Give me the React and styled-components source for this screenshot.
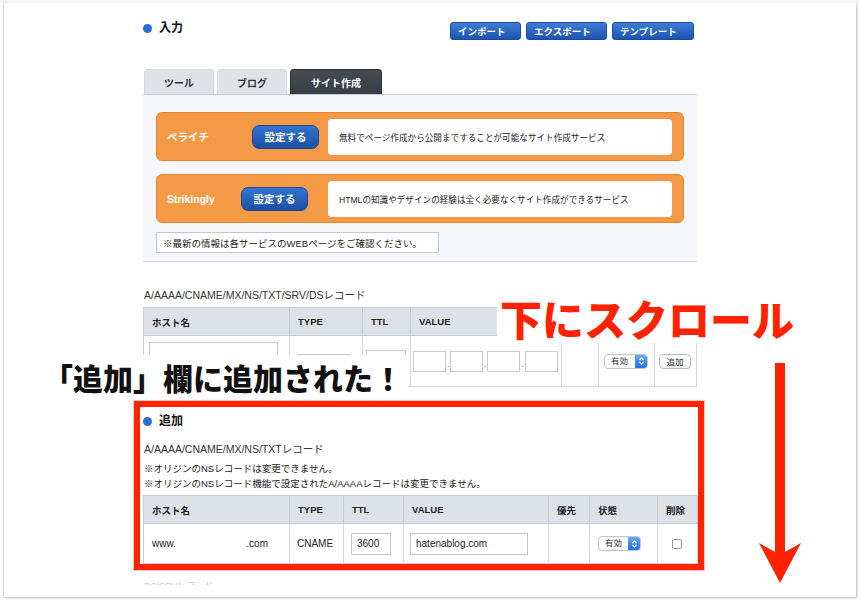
import React from 'react';
import styled, { createGlobalStyle } from 'styled-components';

const GlobalStyle = createGlobalStyle`
  html, body { margin: 0; padding: 0; overflow: hidden; background: #fff; }
  body { font-family: "Liberation Sans", "Noto Sans CJK JP", sans-serif; color: #222; }
  * { box-sizing: border-box; }
`;

const Screen = styled.div`
  position: relative;
  width: 860px;
  height: 604px;
  overflow: hidden;
  background: linear-gradient(#f4f4f4 0 3px, #fff 3px);
  padding: 3px 0 0 3px;
`;

const Page = styled.div`
  width: 853px;
  height: 594px;
  background: #fff;
  border-left: 1px solid #d9d9d9;
  box-shadow: 1px 1px 2px rgba(0, 0, 0, 0.28);
  padding: 16px 0 0 139px;
  overflow: hidden;
`;

const Column = styled.div`
  width: 554px;
  display: flex;
  flex-direction: column;
`;

const HeaderRow = styled.div`
  display: flex;
  justify-content: space-between;
  align-items: flex-start;
  height: 21px;
`;

const Heading = styled.h2`
  margin: ${p => p.mt || 0}px 0 0;
  display: flex;
  align-items: center;
  gap: 7px;
  font-size: 12px;
  font-weight: bold;
  line-height: 13px;
  color: #111;
`;

const Dot = styled.span`
  width: 9px;
  height: 9px;
  border-radius: 50%;
  background: #2a6fd6;
`;

const ActionGroup = styled.div`
  display: flex;
  gap: 5px;
  margin: 3px 3px 0 0;
`;

const ActionButton = styled.button`
  width: ${p => p.w}px;
  height: 18px;
  padding: 0 0 0 7px;
  text-align: left;
  font-family: inherit;
  font-size: 9.5px;
  font-weight: bold;
  color: #fff;
  background: linear-gradient(#3d7cd6, #1d55ae);
  border: 1px solid #1a4b9c;
  border-radius: 3px;
`;

const TabBar = styled.div`
  margin-top: 29px;
  display: flex;
  gap: 3px;
  padding-left: 1px;
  border-bottom: 1px solid #c4c9d0;
`;

const Tab = styled.div`
  width: ${p => p.w}px;
  height: 25px;
  display: flex;
  align-items: center;
  justify-content: center;
  font-size: 10px;
  font-weight: bold;
  border-radius: 4px 4px 0 0;
  color: ${p => (p.active ? '#fff' : '#333')};
  background: ${p => (p.active ? 'linear-gradient(#444b53, #373d44)' : '#dfe3e8')};
  border: 1px solid ${p => (p.active ? '#2b3137' : '#d6dae0')};
  border-bottom: none;
`;

const Panel = styled.div`
  background: #f6f7fa;
  border-bottom: 1px solid #d3d6da;
  padding: 17px 13px 8px;
  display: flex;
  flex-direction: column;
`;

const ServiceBox = styled.div`
  height: 49px;
  display: flex;
  align-items: center;
  padding: 0 11px 0 10px;
  margin-bottom: ${p => p.mb}px;
  background: #f49a47;
  border: 1px solid #e5852d;
  border-radius: 6px;
`;

const ServiceName = styled.span`
  width: ${p => p.w}px;
  color: #fff;
  font-size: ${p => p.fs}px;
  font-weight: bold;
`;

const SetButton = styled.button`
  width: 67px;
  height: 24px;
  padding: 0;
  font-family: inherit;
  font-size: 10.5px;
  font-weight: bold;
  color: #fff;
  background: linear-gradient(#3474d0, #1b50a6);
  border: 1px solid #1a4a98;
  border-radius: 7px;
`;

const Description = styled.div`
  margin-left: auto;
  width: 344px;
  height: 36px;
  display: flex;
  align-items: center;
  padding-left: 11px;
  background: #fff;
  border-radius: 4px;
  font-size: 8.6px;
  color: #222;
`;

const Notice = styled.div`
  width: 283px;
  height: 21px;
  display: flex;
  align-items: center;
  padding-left: 6px;
  background: #fff;
  border: 1px solid #c6c6c6;
  font-size: 9.5px;
  color: #222;
`;

const RecordLabel = styled.div`
  margin-top: ${p => p.mt}px;
  padding-left: 1px;
  font-size: 10.5px;
  line-height: 12px;
  color: #333;
`;

const Notes = styled.div`
  margin-top: 6px;
  padding-left: 1px;
  font-size: 9.5px;
  line-height: 15px;
  color: #222;
`;

const Table = styled.div`
  margin-top: ${p => p.mt}px;
  display: grid;
  grid-template-columns: ${p => p.cols.map(c => `${c}px`).join(' ')};
  border-left: 1px solid #c8cdd3;
  border-top: 1px solid #c8cdd3;
`;

const HeadCell = styled.div`
  height: 28px;
  display: flex;
  align-items: center;
  padding-left: 8px;
  background: #dde2e8;
  border-right: 1px solid #c5cad1;
  border-bottom: 1px solid #c5cad1;
  font-size: 9.5px;
  font-weight: bold;
  color: #222;
`;

const BodyCell = styled.div`
  height: ${p => p.h}px;
  display: flex;
  align-items: center;
  justify-content: ${p => (p.spread ? 'space-between' : 'flex-start')};
  padding: 0 ${p => p.pr || 0}px 0 ${p => p.pl || 0}px;
  gap: ${p => p.gap || 0}px;
  background: #fff;
  border-right: 1px solid #d5d8dc;
  border-bottom: 1px solid #d5d8dc;
  font-size: 10px;
  color: #222;
`;

const TextInput = styled.div`
  width: ${p => p.w}px;
  height: ${p => p.h}px;
  display: flex;
  align-items: center;
  padding-left: 5px;
  background: #fff;
  border: 1px solid #c9c9c9;
  font-size: 10px;
  color: #222;
`;

const Sep = styled.span`
  font-size: 8px;
  color: #444;
  line-height: 1;
  margin-top: 8px;
`;

const Select = styled.div`
  width: ${p => p.w}px;
  height: 15px;
  display: flex;
  background: #fff;
  border: 1px solid #c4c4c4;
  border-radius: 4px;
  overflow: hidden;
`;

const SelectText = styled.span`
  flex: 1;
  padding-left: 6px;
  font-size: 8.5px;
  line-height: 13px;
  color: #333;
`;

const SelectArrow = styled.span`
  width: 12px;
  display: flex;
  align-items: center;
  justify-content: center;
  background: linear-gradient(#69a9f8, #1f6fe5);
`;

const SmallButton = styled.div`
  width: 32px;
  height: 15px;
  display: flex;
  align-items: center;
  justify-content: center;
  font-size: 8.5px;
  color: #333;
  background: linear-gradient(#fff, #f1f1f1);
  border: 1px solid #bdbdbd;
  border-radius: 4px;
`;

const Checkbox = styled.span`
  width: 10px;
  height: 10px;
  background: #fff;
  border: 1px solid #9a9a9a;
  border-radius: 2px;
`;

const RedFrame = styled.div`
  margin: 14px 0 0 -9px;
  width: 570px;
  height: 169px;
  border: 6px solid #ff2400;
  box-shadow: 0 0 0 1px rgba(255, 90, 70, 0.35);
  padding: 8px 1px 0 3px;
  overflow: hidden;
  display: flex;
  flex-direction: column;
`;

const Trailing = styled.div`
  margin-top: 10px;
  height: 5px;
  overflow: hidden;
  font-size: 9px;
  line-height: 12px;
  color: #c9c9c9;
  padding-left: 1px;
`;

const RedNote = styled.div`
  position: absolute;
  left: 497px;
  top: 293px;
  width: 306px;
  height: 50px;
  padding-left: 3px;
  background: #fff;
  font-family: "Noto Sans CJK JP", sans-serif;
  font-size: 42px;
  font-weight: 900;
  line-height: 50px;
  color: #ff2200;
  white-space: nowrap;
`;

const BlackNote = styled.div`
  position: absolute;
  left: 20px;
  top: 355px;
  width: 388px;
  height: 44px;
  padding-left: 23px;
  background: #fff;
  font-family: "Noto Sans CJK JP", sans-serif;
  font-size: 30px;
  font-weight: 900;
  line-height: 44px;
  color: #111;
  white-space: nowrap;
`;

const ArrowSvg = styled.svg`
  position: absolute;
  left: 755px;
  top: 360px;
`;

const Updown = () => (
  <svg width="7" height="10" viewBox="0 0 7 10">
    <path d="M1.5 4 L3.5 2 L5.5 4 M1.5 6 L3.5 8 L5.5 6" fill="none" stroke="#fff" strokeWidth="1.2" />
  </svg>
);

const StatusSelect = ({ w }) => (
  <Select w={w}>
    <SelectText>有効</SelectText>
    <SelectArrow>
      <Updown />
    </SelectArrow>
  </Select>
);

const cols1 = [146, 73, 48, 151, 37, 56, 42];
const cols2 = [146, 54, 60, 145, 41, 68, 40];

export default function App() {
  return (
    <>
      <GlobalStyle />
      <Screen>
        <Page>
          <Column>
            <HeaderRow>
              <Heading mt={3}>
                <Dot />
                入力
              </Heading>
              <ActionGroup>
                <ActionButton w={71}>インポート</ActionButton>
                <ActionButton w={81}>エクスポート</ActionButton>
                <ActionButton w={82}>テンプレート</ActionButton>
              </ActionGroup>
            </HeaderRow>

            <TabBar>
              <Tab w={70}>ツール</Tab>
              <Tab w={70}>ブログ</Tab>
              <Tab w={92} active>
                サイト作成
              </Tab>
            </TabBar>

            <Panel>
              <ServiceBox mb={13}>
                <ServiceName w={85} fs={10.5}>ペライチ</ServiceName>
                <SetButton>設定する</SetButton>
                <Description>無料でページ作成から公開まですることが可能なサイト作成サービス</Description>
              </ServiceBox>
              <ServiceBox mb={9}>
                <ServiceName w={74} fs={10.5}>Strikingly</ServiceName>
                <SetButton>設定する</SetButton>
                <Description>HTMLの知識やデザインの経験は全く必要なくサイト作成ができるサービス</Description>
              </ServiceBox>
              <Notice>※最新の情報は各サービスのWEBページをご確認ください。</Notice>
            </Panel>

            <RecordLabel mt={27}>A/AAAA/CNAME/MX/NS/TXT/SRV/DSレコード</RecordLabel>
            <Table mt={6} cols={cols1}>
              <HeadCell>ホスト名</HeadCell>
              <HeadCell>TYPE</HeadCell>
              <HeadCell>TTL</HeadCell>
              <HeadCell>VALUE</HeadCell>
              <HeadCell>優先</HeadCell>
              <HeadCell>状態</HeadCell>
              <HeadCell>追加</HeadCell>
              <BodyCell h={51} pl={5}>
                <TextInput w={129} h={38} />
              </BodyCell>
              <BodyCell h={51} pl={5}>
                <StatusSelect w={58} />
              </BodyCell>
              <BodyCell h={51} pl={3}>
                <TextInput w={40} h={22} />
              </BodyCell>
              <BodyCell h={51} pl={2} gap={1}>
                <TextInput w={33} h={21} />
                <Sep>.</Sep>
                <TextInput w={33} h={21} />
                <Sep>.</Sep>
                <TextInput w={33} h={21} />
                <Sep>.</Sep>
                <TextInput w={33} h={21} />
              </BodyCell>
              <BodyCell h={51} />
              <BodyCell h={51} pl={5}>
                <StatusSelect w={44} />
              </BodyCell>
              <BodyCell h={51} pl={4}>
                <SmallButton>追加</SmallButton>
              </BodyCell>
            </Table>

            <RedFrame>
              <Heading>
                <Dot />
                追加
              </Heading>
              <RecordLabel mt={15}>A/AAAA/CNAME/MX/NS/TXTレコード</RecordLabel>
              <Notes>
                ※オリジンのNSレコードは変更できません。
                <br />
                ※オリジンのNSレコード機能で設定されたA/AAAAレコードは変更できません。
              </Notes>
              <Table mt={4} cols={cols2}>
                <HeadCell>ホスト名</HeadCell>
                <HeadCell>TYPE</HeadCell>
                <HeadCell>TTL</HeadCell>
                <HeadCell>VALUE</HeadCell>
                <HeadCell>優先</HeadCell>
                <HeadCell>状態</HeadCell>
                <HeadCell>削除</HeadCell>
                <BodyCell h={40} pl={8} pr={21} spread>
                  <span>www.</span>
                  <span>.com</span>
                </BodyCell>
                <BodyCell h={40} pl={7}>
                  CNAME
                </BodyCell>
                <BodyCell h={40} pl={7}>
                  <TextInput w={40} h={22}>3600</TextInput>
                </BodyCell>
                <BodyCell h={40} pl={6}>
                  <TextInput w={118} h={22}>hatenablog.com</TextInput>
                </BodyCell>
                <BodyCell h={40} />
                <BodyCell h={40} pl={8}>
                  <StatusSelect w={43} />
                </BodyCell>
                <BodyCell h={40} pl={14}>
                  <Checkbox />
                </BodyCell>
              </Table>
            </RedFrame>
            <Trailing>DS/SRVレコード</Trailing>
          </Column>
        </Page>

        <RedNote>下にスクロール</RedNote>
        <BlackNote>「追加」欄に追加された！</BlackNote>
        <ArrowSvg width="50" height="226" viewBox="0 0 50 226">
          <path d="M20 3 H30 V192 L46 183 L25 223 L4 183 L20 192 Z" fill="#ff2200" />
        </ArrowSvg>
      </Screen>
    </>
  );
}
